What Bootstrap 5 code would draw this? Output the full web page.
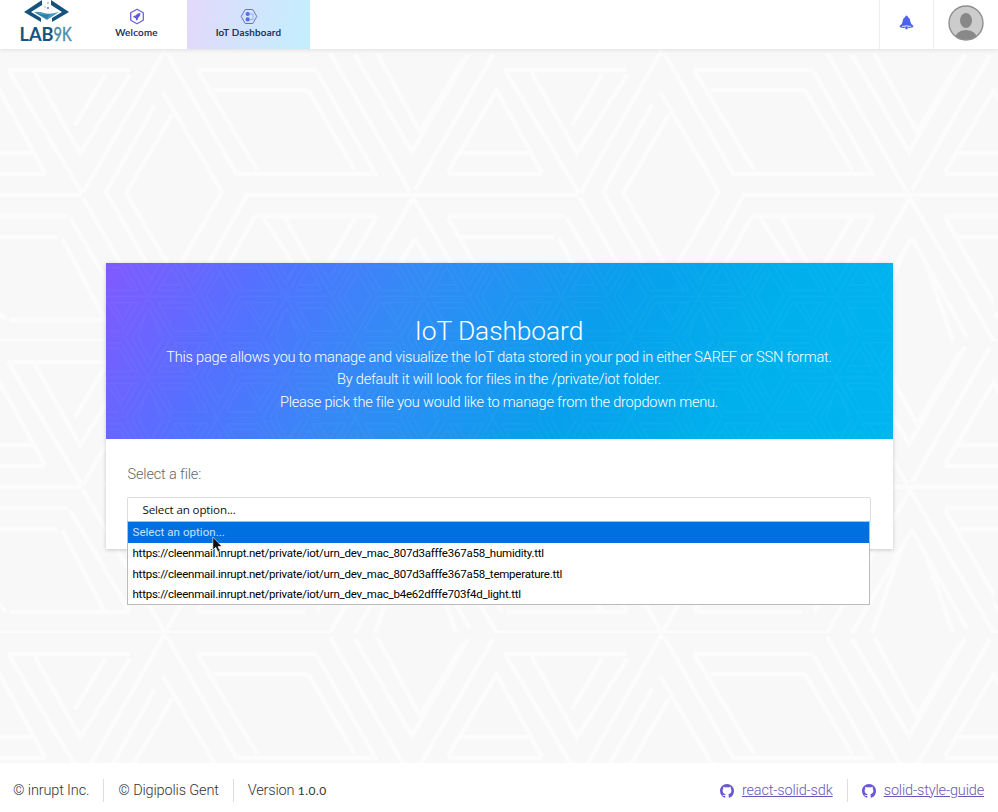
<!DOCTYPE html>
<html lang="en">
<head>
<meta charset="utf-8">
<meta name="viewport" content="width=device-width, initial-scale=1">
<title>IoT Dashboard</title>
<link rel="stylesheet" href="https://cdn.jsdelivr.net/npm/bootstrap@5.3.0/dist/css/bootstrap.min.css">
<style>
body{font-family:Roboto,sans-serif;font-weight:300;background:#f8f8f8;color:#333;height:812px;overflow:hidden}
.page-pattern,.hero-pattern{position:absolute;inset:0;width:100%;height:100%;z-index:0}
.topbar{height:49px;box-shadow:0 1px 4px rgba(0,0,0,.1);z-index:2}
.brand-link{width:86px;padding-left:17px}
.tab-link{width:101px;font:500 9.8px/12px Lato,sans-serif;letter-spacing:.3px;color:#0a2550;text-decoration:none;padding-top:8px}
.tab-link svg{margin-bottom:1px}
.tab-link.current{width:123px;background:linear-gradient(100deg,#e2d9fb 5%,#d3e3fc 45%,#c5eefd 95%)}
.tab-label{white-space:nowrap;-webkit-text-stroke:.15px #0a2550}
.tool-cell{border-left:1px solid #eee;width:54px;padding-bottom:3px}
.user-cell{width:65px}
.panel{width:787px;height:286px;margin-top:214px;box-shadow:0 1px 4px rgba(0,0,0,.2);z-index:1}
.hero{height:176px;padding-top:52px;color:#fff;background:linear-gradient(118deg,#7c5cff 2%,#5470ff 18%,#348af6 36%,#089fec 60%,#00b0ed 80%,#00b5ef)}
.hero h1{font-size:26.4px;line-height:33px;font-weight:300;letter-spacing:-.1px}
.hero p{font-size:14.6px;line-height:22.3px;letter-spacing:-.225px;margin-top:-2px}
.file-label{font-size:14.5px;line-height:20px;padding-top:26px;padding-left:1px;letter-spacing:-.15px;color:#666}
.select-area{padding-left:21px}
.picker{width:744px;height:25px;margin-top:12px;border:1px solid #ddd;border-radius:2px 2px 0 0;padding-left:15px;font:400 11.6px/24px "Open Sans",sans-serif;letter-spacing:-.15px;color:#111}
.options{position:absolute;left:-1px;top:23px;width:743px;height:84px;border:1px solid #bbb;background:#fff;font:400 11.5px/20.6px Roboto,sans-serif;letter-spacing:-.23px;color:#000}
.options li{height:20.5px;padding-left:5px}
.options .chosen{height:21px;line-height:21px;background:#0070e0;color:#c9e2ff;letter-spacing:.05px}
.pointer{position:absolute;left:84px;top:38px}
.foot{height:49px;margin-top:auto;font-size:14.5px;letter-spacing:-.15px;padding:6px 14px 0 13px;z-index:1}
.foot .sep{width:1px;height:23px;background:#ddd;margin:0 14px}
.foot a{color:#6c55b8}
.oldstyle{font:400 12px Lato,sans-serif;letter-spacing:.5px}
</style>
<script src="https://cdn.jsdelivr.net/npm/bootstrap@5.3.0/dist/js/bootstrap.bundle.min.js"></script>
</head>
<body class="d-flex flex-column position-relative m-0">
<svg class="page-pattern" aria-hidden="true">
  <defs>
    <path id="lattice" fill="none" d="M8 70H130M8 70L82 193M35 73L80 153L130 75M105 75L75 125M-5 82L45 173M0 153H32M0 174H45M0 195H82
      M165 50L83 193M155 105L106 192L165 295M172 115L126 193L170 268M163 92L222 192L165 290M167 53L237 175M248 193L165 341M197 70L257 170
      M197 70H317M213 90H308M317 72L375 173M308 90L355 170M237 174H378M248 195H497
      M330 53L410 192M355 55L412 152L468 55M377 53L420 132L463 60M493 55L415 190M510 68L448 172M460 153H497M448 174H497
      M0 216H68M70 218L130 320M0 237H58M62 238L105 320M83 198L165 341
      M255 216H377M255 216L197 320M262 216L317 300M285 218L317 275M355 218L317 282M377 216L317 320M413 198L330 341M413 198L497 341
      M415 238L355 341M415 238L470 337M448 216H497M448 218L500 308M458 237H497M403 260L375 341M428 260L456 341
      M10 320H130M200 320H305M0 341H330M-3 310L6 320"/>
    <pattern id="pageTile" x="0" y="49" width="497" height="292" patternUnits="userSpaceOnUse"><use href="#lattice" y="-49" stroke="#fff" stroke-opacity=".55" stroke-width="4.500"/></pattern>
    <pattern id="heroTile" width="497" height="292" patternUnits="userSpaceOnUse" patternTransform="translate(-72 -7) scale(.277)"><use href="#lattice" y="-49" stroke="#a8e4ff" stroke-opacity=".045" stroke-width="6"/></pattern>
  </defs>
  <rect width="100%" height="100%" fill="url(#pageTile)"/>
</svg>

<header class="topbar bg-white d-flex position-relative">
  <a class="brand-link" href="#" aria-label="LAB9K">
    <svg width="66" height="47" viewBox="17 0 66 47">
      <path d="M42 0L24 12L41 22V18L31 12L42 5ZM51 0L69 12L52 22V18L62 12L51 5Z" fill="#15537d"/>
      <path d="M34 12Q39 11 44 13T59 12L47 20Z" fill="#4d9ac0"/>
      <path d="M34 12Q42 16 50 14L47 19Z" fill="#2f7ca6"/>
      <circle cx="48" cy="3" r=".8" fill="#789"/><circle cx="45" cy="7" r=".7" fill="#89a"/><circle cx="48" cy="8" r="1" fill="#678"/>
      <text x="19.500" y="40.500" font-family="Lato,sans-serif" font-size="18.500" font-weight="700" textLength="34" lengthAdjust="spacingAndGlyphs" fill="#125581">LAB</text>
      <text x="53.500" y="40.500" font-family="Lato,sans-serif" font-size="18.500" font-weight="400" textLength="18" lengthAdjust="spacingAndGlyphs" fill="#4c89aa" stroke="#4c89aa" stroke-width=".4">9K</text>
    </svg>
  </a>
  <a class="tab-link d-flex flex-column align-items-center" href="#">
    <svg width="18" height="17" viewBox="0 0 18 17"><path d="M9 1.200L15.300 4.800V12.200L9 15.800L2.700 12.200V4.800Z" fill="none" stroke="#6c63dc" stroke-width="1.300" stroke-linejoin="round"/><path d="M12.600 5Q9.500 5 7.600 7.400L5.600 7.900L5.200 9.500L6.800 9.600L8 10.900L8 12.400L9.600 11.700L10.200 9.800Q12.500 8 12.600 5Z" fill="#5f5ae0"/></svg>
    <span class="tab-label">Welcome</span>
  </a>
  <a class="tab-link current d-flex flex-column align-items-center" href="#">
    <svg width="18" height="17" viewBox="0 0 18 17"><path d="M5.200 1.500H12.800L16.800 8.500L12.800 15.500H5.200L1.200 8.500Z" fill="none" stroke="#6c70cc" stroke-width="1"/><circle cx="7.700" cy="6" r="2.100" fill="#566be8"/><circle cx="7.700" cy="11.400" r="2.100" fill="#566be8"/><path d="M10 6H13V11.500H10" fill="none" stroke="#8fabee" stroke-width=".9"/></svg>
    <span class="tab-label">IoT Dashboard</span>
  </a>
  <div class="tool-cell ms-auto d-flex align-items-center justify-content-center">
    <svg width="15" height="16" viewBox="0 0 15 16"><path d="M7.500.5Q8.800.8 8.900 2Q11.300 3.200 11.400 6.500Q11.600 8.700 14 10.500Q14.800 11.500 14 12.200Q7.500 14.300 1 12.200Q.2 11.500 1 10.500Q3.400 8.700 3.600 6.500Q3.700 3.200 6.100 2Q6.200.8 7.500.5Z" fill="#4e62f0"/><path d="M3 11.500Q7.500 10.200 12 11.500" fill="none" stroke="#fff" stroke-width=".8"/><circle cx="7.500" cy="12.800" r="1.800" fill="#4e62f0" stroke="#fff" stroke-width=".5"/></svg>
  </div>
  <div class="tool-cell user-cell d-flex align-items-center justify-content-center">
    <svg width="36" height="36" viewBox="0 0 36 36"><defs><clipPath id="face"><circle cx="18" cy="18" r="17"/></clipPath></defs><circle cx="18" cy="18" r="17" fill="#ccc"/><g clip-path="url(#face)" fill="#888"><ellipse cx="18" cy="15.500" rx="6" ry="7.500"/><path d="M6 36Q7 25.500 18 25Q29 25.500 30 36Z"/></g><circle cx="18" cy="18" r="17" fill="none" stroke="#909090" stroke-width="1.400"/></svg>
  </div>
</header>

<main class="panel bg-white mx-auto position-relative">
  <section class="hero position-relative overflow-hidden text-center">
    <svg class="hero-pattern" aria-hidden="true"><rect width="100%" height="100%" fill="url(#heroTile)"/></svg>
    <div class="position-relative">
      <h1 class="m-0">IoT Dashboard</h1>
      <p class="mb-0">This page allows you to manage and visualize the IoT data stored in your pod in either SAREF or SSN format.<br>By default it will look for files in the /private/iot folder.<br>Please pick the file you would like to manage from the dropdown menu.</p>
    </div>
  </section>
  <section class="select-area">
    <div class="file-label">Select a file:</div>
    <div class="picker position-relative">Select an option...
      <ul class="options list-unstyled m-0">
        <li class="chosen">Select an option...</li>
        <li>https://cleenmail.inrupt.net/private/iot/urn_dev_mac_807d3afffe367a58_humidity.ttl</li>
        <li>https://cleenmail.inrupt.net/private/iot/urn_dev_mac_807d3afffe367a58_temperature.ttl</li>
        <li>https://cleenmail.inrupt.net/private/iot/urn_dev_mac_b4e62dfffe703f4d_light.ttl</li>
      </ul>
      <svg class="pointer" width="11" height="18" viewBox="0 0 11 18"><path d="M.8 1V14L3.800 11.300L6 16L8 15L6 10.500H10Z" fill="#111" stroke="#fff" stroke-width=".6"/></svg>
    </div>
  </section>
</main>

<footer class="foot bg-white d-flex align-items-center position-relative">
  <span>© inrupt Inc.</span><span class="sep"></span>
  <span>© Digipolis Gent</span><span class="sep"></span>
  <span>Version <span class="oldstyle">1.0.0</span></span>
  <svg class="ms-auto me-2" width="14" height="14" viewBox="0 0 16 16" fill="#6a57d6"><path id="octo" d="M8 0C3.580 0 0 3.580 0 8c0 3.540 2.290 6.530 5.470 7.590.4.070.55-.17.55-.38 0-.19-.01-.82-.01-1.490C4 14.100 3.300 13.200 2.700 12.200C3.800 12 4.300 13.200 6 12.700C6.100 12.200 6.200 11.900 6.500 11.600C4.200 11.200 3 10 3 7.500C3 6.600 3.300 6 3.740 5.500C3.500 5 3.500 4 3.800 3.200C4.600 3.200 5.300 3.600 6 4.020C7.300 3.750 8.700 3.750 10 4.020C10.700 3.600 11.400 3.200 12.200 3.200C12.500 4 12.500 5 12.260 5.500C12.700 6 13 6.600 13 7.500C13 10 11.800 11.200 9.500 11.600C9.800 11.900 9.980 12.400 9.980 13V15.210c0 .21.150.46.55.38A8.010 8.010 0 0 0 16 8c0-4.420-3.580-8-8-8z"/></svg>
  <a href="#">react-solid-sdk</a><span class="sep"></span>
  <svg class="me-2" width="14" height="14" viewBox="0 0 16 16" fill="#6a57d6"><use href="#octo"/></svg>
  <a href="#">solid-style-guide</a>
</footer>
</body>
</html>
